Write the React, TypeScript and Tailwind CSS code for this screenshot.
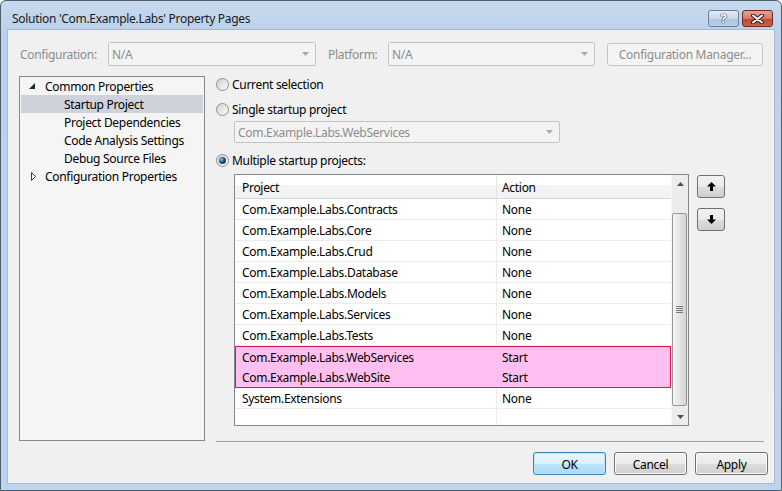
import React from "react";

const FONT = "font-['Noto_Sans','Open_Sans',sans-serif]";

function Radio({ checked }: { checked?: boolean }) {
  return (
    <span className="w-[13px] h-[13px] rounded-full border border-[#8e8f8f] bg-gradient-to-br from-[#cfcfcf] to-[#fdfdfd] flex items-center justify-center shrink-0">
      {checked && (
        <span className="w-[7px] h-[7px] rounded-full bg-[radial-gradient(circle_at_35%_35%,#8fc8ea_0%,#1f5a8c_40%,#0a1e36_100%)]" />
      )}
    </span>
  );
}

function DropArrow() {
  return (
    <svg width="7" height="4" viewBox="0 0 7 4" className="shrink-0">
      <path d="M0 0 H7 L3.5 4 Z" fill="#a9a9a9" />
    </svg>
  );
}

function DisabledSelect({ text, w }: { text: string; w: string }) {
  return (
    <div
      className={`${w} h-full border border-[#c3c3c3] rounded-[2px] bg-[#f3f3f3] flex items-center pl-[3px] pr-[6px] text-[#8d8d8d]`}
    >
      <span className="flex-1 pt-[2px]">{text}</span>
      <DropArrow />
    </div>
  );
}

function BigArrow({ down }: { down?: boolean }) {
  return (
    <svg width="9" height="9" viewBox="0 0 9 9" className={down ? "rotate-180" : ""}>
      <path d="M4.5 0 L9 4.5 H6 V9 H3 V4.5 H0 Z" fill="#000" />
    </svg>
  );
}

function SmallTri({ down }: { down?: boolean }) {
  return (
    <svg width="7" height="4" viewBox="0 0 7 4">
      {down ? <path d="M0 0 H7 L3.5 4 Z" fill="#4e4e4e" /> : <path d="M0 4 H7 L3.5 0 Z" fill="#4e4e4e" />}
    </svg>
  );
}

const rows: [string, string][] = [
  ["Com.Example.Labs.Contracts", "None"],
  ["Com.Example.Labs.Core", "None"],
  ["Com.Example.Labs.Crud", "None"],
  ["Com.Example.Labs.Database", "None"],
  ["Com.Example.Labs.Models", "None"],
  ["Com.Example.Labs.Services", "None"],
  ["Com.Example.Labs.Tests", "None"],
];

function Row({ p, a }: { p: string; a: string }) {
  return (
    <div className="h-[21px] flex border-b border-[#ececec] shrink-0">
      <div className="w-[262px] border-r border-[#ececec] pl-[7px] pt-[2px] flex items-center">{p}</div>
      <div className="flex-1 pl-[5px] pt-[2px] flex items-center">{a}</div>
    </div>
  );
}

function DialogButton({ label, primary }: { label: string; primary?: boolean }) {
  return (
    <div
      className={
        primary
          ? "w-[73px] h-[23px] pt-[2px] rounded-[3px] border border-[#3c7fb1] bg-[linear-gradient(#eaf6fd_0%,#d9f0fc_50%,#bee6fd_51%,#a7d9f5_100%)] flex items-center justify-center shadow-[inset_0_0_0_1px_#c4e5f6]"
          : "w-[73px] h-[23px] pt-[2px] rounded-[3px] border border-[#707070] bg-[linear-gradient(#f2f2f2_0%,#ebebeb_50%,#dddddd_51%,#cfcfcf_100%)] flex items-center justify-center shadow-[inset_0_0_0_1px_#fcfcfc]"
      }
    >
      {label}
    </div>
  );
}

function TreeRow({ children, selected }: { children: React.ReactNode; selected?: boolean }) {
  return (
    <div className={`h-[18px] pt-[2px] flex items-center pl-[43px] ${selected ? "bg-[#cfd1db]" : ""}`}>{children}</div>
  );
}

export default function App() {
  return (
    <div className={`w-[782px] h-[491px] ${FONT} text-[12px] leading-[16px] tracking-[-0.3px] text-[#000]`}>
      <div className="w-full h-full flex flex-col rounded-t-[6px] border border-[#4f5d6c] bg-[linear-gradient(#c7d9ee_0px,#bcd2ea_30px,#bed4ec_100%)]">
        {/* Title bar */}
        <div className="h-[28px] flex items-start pt-[9px] pl-[11px] pr-[8px] shrink-0">
          <span className="flex-1 mt-[1px] text-[#1b1b1b]">Solution 'Com.Example.Labs' Property Pages</span>
          <div className="flex gap-[3px]">
            <div className="w-[31px] h-[17px] rounded-[3px] border border-[#6a7f9c] bg-[linear-gradient(#e4ecf6_0%,#c9d8ea_50%,#aec3dd_51%,#bcd0e8_100%)] flex items-center justify-center">
              <span className="text-[13px] leading-[13px] font-bold text-white [text-shadow:0_0_1px_#333,0_0_1px_#333,0_0_1px_#333]">?</span>
            </div>
            <div className="w-[31px] h-[17px] rounded-[3px] border border-[#6e2a22] bg-[linear-gradient(#e6a392_0%,#d27a66_50%,#bd4a36_51%,#c9604a_100%)] flex items-center justify-center">
              <svg width="13" height="10" viewBox="0 0 13 10">
                <path d="M2 1.5 L11 8.5 M11 1.5 L2 8.5" stroke="#3b1a16" strokeWidth="4" strokeLinecap="round" />
                <path d="M2 1.5 L11 8.5 M11 1.5 L2 8.5" stroke="#ffffff" strokeWidth="2" strokeLinecap="round" />
              </svg>
            </div>
          </div>
        </div>

        {/* Client area */}
        <div className="flex-1 mx-[6px] mb-[6px] border border-[#a6bbd3] bg-[#f0f0f0] flex flex-col pl-[11px] pr-[10px] pt-[12px]">
          {/* Config row */}
          <div className="h-[24px] flex items-center shrink-0">
            <span className="w-[89px] pl-[1px] pt-[2px] text-[#8d8d8d]">Configuration:</span>
            <DisabledSelect text="N/A" w="w-[208px]" />
            <span className="w-[60px] ml-[12px] pt-[2px] text-[#8d8d8d]">Platform:</span>
            <DisabledSelect text="N/A" w="w-[207px]" />
            <div className="ml-[12px] w-[156px] h-[23px] pt-[2px] border border-[#c4c4c4] rounded-[3px] bg-[#f4f4f4] flex items-center justify-center text-[#8d8d8d]">
              Configuration Manager...
            </div>
          </div>

          {/* Main */}
          <div className="mt-[10px] flex shrink-0">
            {/* Tree */}
            <div className="w-[186px] h-[365px] border border-[#828790] bg-[#f5f5f5] px-[1px] shrink-0">
              <div className="h-[18px] pt-[2px] flex items-center">
                <span className="w-[24px] flex justify-end pr-[10px] -mt-[2px]">
                  <svg width="6" height="6" viewBox="0 0 6 6">
                    <path d="M6 0 V6 H0 Z" fill="#262626" />
                  </svg>
                </span>
                <span>Common Properties</span>
              </div>
              <TreeRow selected>Startup Project</TreeRow>
              <TreeRow>Project Dependencies</TreeRow>
              <TreeRow>Code Analysis Settings</TreeRow>
              <TreeRow>Debug Source Files</TreeRow>
              <div className="h-[18px] pt-[2px] flex items-center">
                <span className="w-[24px] flex justify-end pr-[9px] -mt-[2px]">
                  <svg width="5" height="9" viewBox="0 0 5 9">
                    <path d="M0.5 0.5 L4.5 4.5 L0.5 8.5 Z" fill="#fff" stroke="#3a3a3a" strokeWidth="1" />
                  </svg>
                </span>
                <span>Configuration Properties</span>
              </div>
            </div>

            {/* Right panel */}
            <div className="ml-[11px] flex-1 flex flex-col">
              <div className="h-[16px] flex items-center gap-[3px]">
                <Radio />
                <span className="pt-[2px]">Current selection</span>
              </div>
              <div className="mt-[9px] h-[16px] flex items-center gap-[3px]">
                <Radio />
                <span className="pt-[2px]">Single startup project</span>
              </div>
              <div className="mt-[4px] ml-[18px] h-[22px] w-[326px]">
                <DisabledSelect text="Com.Example.Labs.WebServices" w="w-[326px]" />
              </div>
              <div className="mt-[9px] h-[16px] flex items-center gap-[3px]">
                <Radio checked />
                <span className="pt-[2px]">Multiple startup projects:</span>
              </div>

              <div className="mt-[6px] flex">
                {/* Table */}
                <div className="ml-[18px] w-[455px] h-[252px] border border-[#828790] bg-white flex shrink-0">
                  <div className="flex-1 flex flex-col overflow-hidden">
                    <div className="h-[24px] flex border-b border-[#d5d5d5] bg-[linear-gradient(#ffffff_0%,#ffffff_42%,#f3f4f6_43%,#f1f2f4_100%)] shrink-0">
                      <div className="w-[262px] border-r border-[#e3e4e6] pl-[7px] pt-[2px] flex items-center">Project</div>
                      <div className="flex-1 pl-[5px] pt-[2px] flex items-center">Action</div>
                    </div>
                    {rows.map(([p, a]) => (
                      <Row key={p} p={p} a={a} />
                    ))}
                    <div className="h-[42px] border border-[#e0174a] bg-[#ffc0f1] flex flex-col shrink-0">
                      <div className="h-[20px] flex">
                        <div className="w-[261px] pl-[6px] pt-[2px] flex items-center">Com.Example.Labs.WebServices</div>
                        <div className="flex-1 pl-[5px] pt-[2px] flex items-center">Start</div>
                      </div>
                      <div className="h-[20px] flex">
                        <div className="w-[261px] pl-[6px] pt-[2px] flex items-center">Com.Example.Labs.WebSite</div>
                        <div className="flex-1 pl-[5px] pt-[2px] flex items-center">Start</div>
                      </div>
                    </div>
                    <Row p="System.Extensions" a="None" />
                    <div className="h-[21px] flex shrink-0">
                      <div className="w-[262px] border-r border-[#ececec]" />
                    </div>
                  </div>
                  {/* Scrollbar */}
                  <div className="w-[17px] bg-[#ececec] border-l border-[#f7f7f7] flex flex-col">
                    <div className="h-[17px] flex items-center justify-center">
                      <SmallTri />
                    </div>
                    <div className="mt-[21px] h-[193px] mr-[1px] rounded-[2px] border border-[#979797] bg-[linear-gradient(90deg,#f4f4f4_0%,#e6e6e6_45%,#d4d4d4_100%)] flex items-center justify-center">
                      <div className="flex flex-col gap-[1px]">
                        <div className="w-[7px] h-px bg-[#7a7a7a]" />
                        <div className="w-[7px] h-px bg-[#7a7a7a]" />
                        <div className="w-[7px] h-px bg-[#7a7a7a]" />
                        <div className="w-[7px] h-px bg-[#7a7a7a]" />
                      </div>
                    </div>
                    <div className="flex-1" />
                    <div className="h-[17px] flex items-center justify-center">
                      <SmallTri down />
                    </div>
                  </div>
                </div>

                {/* Move buttons */}
                <div className="ml-[8px] flex flex-col">
                  <div className="mt-[1px] w-[28px] h-[23px] rounded-[3px] border border-[#707070] bg-[linear-gradient(#f2f2f2_0%,#ebebeb_50%,#dddddd_51%,#cfcfcf_100%)] flex items-center justify-center">
                    <BigArrow />
                  </div>
                  <div className="mt-[10px] w-[28px] h-[23px] rounded-[3px] border border-[#707070] bg-[linear-gradient(#f2f2f2_0%,#ebebeb_50%,#dddddd_51%,#cfcfcf_100%)] flex items-center justify-center">
                    <BigArrow down />
                  </div>
                </div>
              </div>

              <div className="mt-[15px] h-px bg-[#a0a0a0]" />
            </div>
          </div>

          {/* Buttons */}
          <div className="mt-[10px] flex justify-end gap-[8px] mr-[-4px]">
            <DialogButton label="OK" primary />
            <DialogButton label="Cancel" />
            <DialogButton label="Apply" />
          </div>
        </div>
      </div>
    </div>
  );
}
